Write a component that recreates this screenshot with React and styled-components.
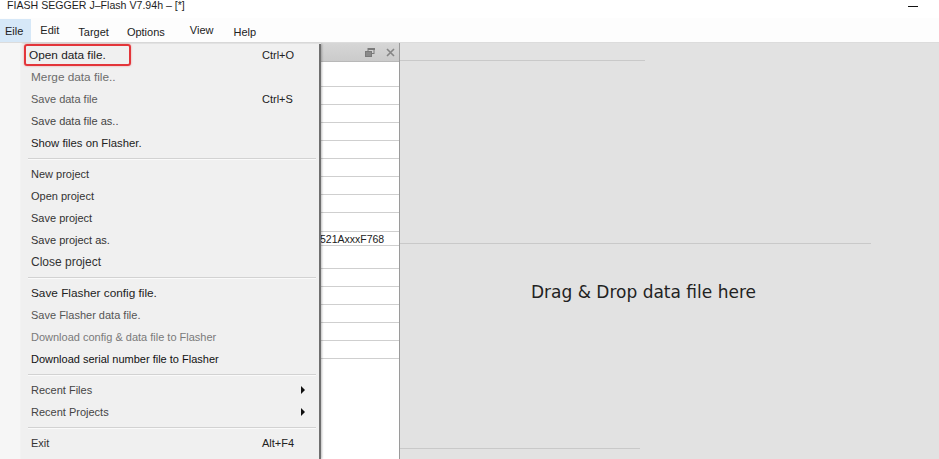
import React from "react";
import styled, { createGlobalStyle } from "styled-components";

const Global = createGlobalStyle`
  html, body { margin: 0; padding: 0; background: #ffffff; }
  body { font-family: "Liberation Sans", Arial, sans-serif; }
  #root { width: 939px; height: 459px; overflow: hidden; }
`;

const Window = styled.div`
  position: relative;
  width: 939px;
  height: 459px;
  display: flex;
  flex-direction: column;
  background: #ffffff;
  overflow: hidden;
`;

const TitleBar = styled.div`
  height: 18px;
  display: flex;
  align-items: flex-start;
  justify-content: space-between;
  padding: 0 21px 0 7px;
  font-size: 10.6px;
  line-height: 11px;
  color: #1e1e1e;
`;

const MinimizeGlyph = styled.span`
  display: block;
  width: 10px;
  height: 1px;
  margin-top: 6px;
  background: #111;
`;

const MenuBar = styled.div`
  height: 24px;
  display: flex;
  align-items: stretch;
  border-bottom: 1px solid #dcdcdc;
  background: #fdfdfd;
`;

const MenuTitle = styled.div`
  display: flex;
  align-items: center;
  padding: ${(p) => (p.$dy || 0)}px 0 0 0;
  margin-left: ${(p) => p.$ml}px;
  font-size: 11px;
  color: #222;
  ${(p) =>
    p.$active &&
    `
    background: #d6e8f8;
    padding-left: 5px;
    padding-right: 8px;
    margin-left: 0;
    height: 23px;
    margin-top: 1px;
  `}
`;

const Workspace = styled.div`
  flex: 1;
  display: flex;
  min-height: 0;
`;

const LeftArea = styled.div`
  width: 321px;
  background: #f6f6f6;
`;

const DataPanel = styled.div`
  width: 78px;
  display: flex;
  flex-direction: column;
  border-right: 1px solid #9a9a9a;
  background: #ffffff;
`;

const PanelHeader = styled.div`
  height: 18px;
  display: flex;
  align-items: center;
  justify-content: flex-end;
  gap: 11px;
  padding-right: 4px;
  background: linear-gradient(#d6d6d6, #cbcbcb);
  border-bottom: 1px solid #b8b8b8;
`;

const PanelRow = styled.div`
  height: ${(p) => p.$h}px;
  box-sizing: border-box;
  border-bottom: ${(p) => (p.$last ? "none" : "1px solid #cfcfcf")};
  font-size: 10.5px;
  line-height: ${(p) => p.$h}px;
  color: #222;
  white-space: nowrap;
  overflow: visible;
  position: relative;
`;

const RowText = styled.span`
  position: relative;
  left: -1px;
  background: #ffffff;
  padding-right: 6px;
`;

const Canvas = styled.div`
  flex: 1;
  display: flex;
  flex-direction: column;
  background: #e2e2e2;
`;

const Rule = styled.div`
  height: 1px;
  width: ${(p) => p.$w}px;
  margin-top: ${(p) => p.$mt}px;
  background: #c9c9c9;
`;

const DropText = styled.div`
  margin-top: ${(p) => p.$mt}px;
  margin-left: 131px;
  font-family: "DejaVu Sans", "Liberation Sans", sans-serif;
  font-size: 17px;
  line-height: 20px;
  color: #222;
`;

const Spacer = styled.div`
  flex: 1;
`;

const Dropdown = styled.div`
  position: absolute;
  left: 21px;
  top: 44px;
  bottom: 0;
  width: 298px;
  background: #f0f0f0;
  border-right: 2px solid #6f6f6f;
  box-shadow: 1px 0 2px rgba(0, 0, 0, 0.25);
  display: flex;
  flex-direction: column;
`;

const Item = styled.div`
  height: 22px;
  display: flex;
  align-items: center;
  padding-left: 10px;
  font-size: ${(p) => p.$fs || 11}px;
  color: ${(p) => p.$c || "#222"};
`;

const Label = styled.span`
  width: 231px;
  white-space: nowrap;
`;

const Highlight = styled.span`
  display: inline-flex;
  align-items: center;
  width: 100px;
  height: 18px;
  margin-left: -7px;
  padding-left: 3px;
  border: 2px solid #e3353a;
  border-radius: 3px;
  box-shadow: 0 0 2px rgba(227, 53, 58, 0.5);
  font-size: 11.8px;
  color: #1a1a1a;
`;

const Shortcut = styled.span`
  font-size: 11px;
  color: #222;
`;

const Arrow = styled.span`
  margin-left: auto;
  margin-right: 14px;
  width: 0;
  height: 0;
  border-top: 4px solid transparent;
  border-bottom: 4px solid transparent;
  border-left: 4px solid #111;
`;

const Separator = styled.div`
  height: 9px;
  display: flex;
  align-items: center;
  padding: 0 3px 0 7px;
  &::after {
    content: "";
    flex: 1;
    height: 1px;
    background: #d2d2d2;
    box-shadow: 0 1px 0 #fafafa;
  }
`;

const menuTitles = [
  { t: "Eile", active: true },
  { t: "Edit", ml: 9 },
  { t: "Target", ml: 19, dy: 3 },
  { t: "Options", ml: 18, dy: 3 },
  { t: "View", ml: 25 },
  { t: "Help", ml: 20, dy: 3 },
];

const groups = [
  [
    { t: "Open data file.", sc: "Ctrl+O", hl: true },
    { t: "Merge data file..", c: "#6c6c6c", fs: 11.8 },
    { t: "Save data file", c: "#5a5a5a", sc: "Ctrl+S" },
    { t: "Save data file as..", c: "#444" },
    { t: "Show files on Flasher.", c: "#222", fs: 11.3 },
  ],
  [
    { t: "New project", c: "#333" },
    { t: "Open project", c: "#333" },
    { t: "Save project", c: "#333" },
    { t: "Save project as.", c: "#333" },
    { t: "Close project", c: "#333", fs: 12 },
  ],
  [
    { t: "Save Flasher config file.", c: "#222", fs: 11.8 },
    { t: "Save Flasher data file.", c: "#555" },
    { t: "Download config & data file to Flasher", c: "#7a7a7a" },
    { t: "Download serial number file to Flasher", c: "#111" },
  ],
  [
    { t: "Recent Files", c: "#444", arrow: true },
    { t: "Recent Projects", c: "#444", arrow: true },
  ],
  [{ t: "Exit", c: "#333", sc: "Alt+F4" }],
];

const rowHeights = [25, 18, 18, 18, 18, 18, 18, 18, 19, 14, 23, 18, 18, 18, 18, 18];

function RestoreIcon() {
  return (
    <svg width="10" height="9" viewBox="0 0 10 9">
      <rect x="3" y="0.5" width="6" height="5" fill="none" stroke="#7a7a7a" />
      <rect x="3" y="0" width="7" height="2" fill="#7a7a7a" />
      <rect x="0.5" y="3.5" width="6" height="5" fill="#8a8a8a" stroke="#7a7a7a" />
    </svg>
  );
}

function CloseIcon() {
  return (
    <svg width="9" height="9" viewBox="0 0 9 9">
      <path d="M1 1 L8 8 M8 1 L1 8" stroke="#858585" strokeWidth="1.6" />
    </svg>
  );
}

export default function App() {
  return (
    <>
      <Global />
      <Window>
        <TitleBar>
          <span>FIASH SEGGER J–Flash V7.94h – [*]</span>
          <MinimizeGlyph />
        </TitleBar>
        <MenuBar>
          {menuTitles.map((m) => (
            <MenuTitle key={m.t} $active={m.active} $ml={m.ml || 0} $dy={m.dy}>
              {m.t}
            </MenuTitle>
          ))}
        </MenuBar>
        <Workspace>
          <LeftArea />
          <DataPanel>
            <PanelHeader>
              <RestoreIcon />
              <CloseIcon />
            </PanelHeader>
            {rowHeights.map((h, i) => (
              <PanelRow key={i} $h={h}>
                {i === 9 && <RowText>521AxxxF768</RowText>}
              </PanelRow>
            ))}
            <PanelRow $h={100} $last />
          </DataPanel>
          <Canvas>
            <Rule $w={245} $mt={17} />
            <Rule $w={471} $mt={182} />
            <DropText $mt={38}>Drag &amp; Drop data file here</DropText>
            <Spacer />
            <Rule $w={240} $mt={0} />
            <Rule $w={0} $mt={9} />
          </Canvas>
        </Workspace>
        <Dropdown>
          {groups.map((g, gi) => (
            <React.Fragment key={gi}>
              {gi > 0 && <Separator />}
              {g.map((it) => (
                <Item key={it.t} $c={it.c} $fs={it.fs}>
                  <Label>{it.hl ? <Highlight>{it.t}</Highlight> : it.t}</Label>
                  {it.sc && <Shortcut>{it.sc}</Shortcut>}
                  {it.arrow && <Arrow />}
                </Item>
              ))}
            </React.Fragment>
          ))}
        </Dropdown>
      </Window>
    </>
  );
}
